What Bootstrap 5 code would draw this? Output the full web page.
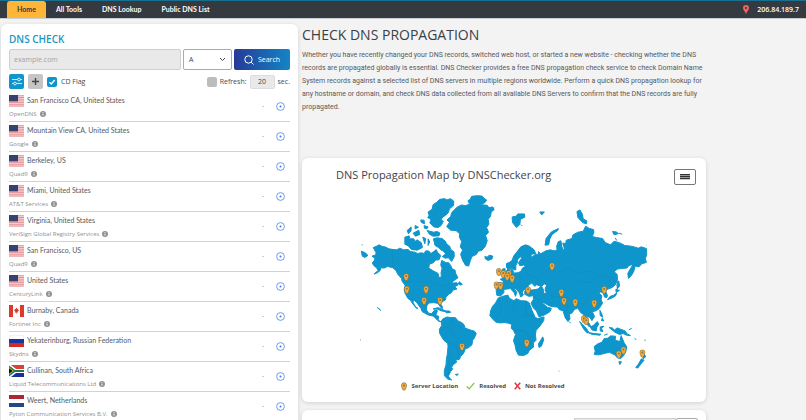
<!DOCTYPE html>
<html lang="en">
<head>
<meta charset="utf-8">
<meta name="viewport" content="width=device-width, initial-scale=1">
<title>DNS Checker</title>
<link href="https://cdn.jsdelivr.net/npm/bootstrap@5.3.0/dist/css/bootstrap.min.css" rel="stylesheet">
<style>
  html { background: #0e96cc; }
  body { font-family: "Open Sans", "Noto Sans", sans-serif; font-size: 7px; line-height: 10px; color: #45494d; background: #f3f3f3; height: 100vh; overflow: hidden; }
  .topbar { background: #343a40; border-top: 1px solid #17708f; border-bottom: 1px solid #c9ced2; height: 19px; padding: 0 7px; }
  .topbar .nav-link { color: #fff; font-family: Lato, "Open Sans", sans-serif; font-weight: 700; font-size: 7px; line-height: 17px; padding: 0 10px; }
  .topbar .nav-link.active { background: #ffb638; color: #343a40; border-radius: 3px 3px 0 0; }
  .ip-text { color: #fff; font-weight: 600; font-size: 7px; line-height: 17px; }
  .page-grid { display: grid; grid-template-columns: minmax(0, 297fr) minmax(0, 404fr) minmax(0, 96fr); column-gap: 4px; padding: 5px 0 0 1px; }
  .panel { background: #fff; border-radius: 6px; box-shadow: 0 1px 4px rgba(0,0,0,.14); }
  .check-panel { padding: 8px 8px 0; }
  .check-title { color: #1797bf; font-size: 10px; line-height: 14px; font-weight: 600; margin: 0 0 3px; }
  .lookup-form { gap: 2px; }
  .field { font-size: 7px; line-height: 10px; height: 21px; border-radius: 2px; min-width: 0; }
  .domain-input { background: #e9e9e9; border: 1px solid #cfcfcf; padding: 0 4px; color: #555; }
  .domain-input::placeholder { color: #a3a3a3; }
  .type-wrap { position: relative; width: 49px; }
  .type-select { appearance: none; width: 100%; border: 1px solid #aaa; background: #fff; padding: 0 5px; color: #444; }
  .type-wrap svg { position: absolute; right: 6px; top: 7px; pointer-events: none; }
  .search-btn { width: 56px; border: 0; color: #fff; background: linear-gradient(90deg, #263a97, #1385c5); }
  .options-row { margin: 4px 0 3px; }
  .refresh-group { gap: 3px; }
  .square-btn { width: 15px; height: 15px; border: 0; padding: 0; border-radius: 2px; background: #c5c5c5; }
  .square-btn.options { background: #0e96cc; }
  .tick { appearance: none; width: 10px; height: 10px; margin: 0; border-radius: 2px; background: #bdbdbd; }
  .tick:checked { background: #0e96cc url("data:image/svg+xml,%3Csvg xmlns='http://www.w3.org/2000/svg' viewBox='0 0 10 10'%3E%3Cpath d='M2.5 5.2 4.3 7 7.7 3' fill='none' stroke='white' stroke-width='1.4'/%3E%3C/svg%3E"); }
  .seconds { width: 25px; height: 14px; font-size: 7px; text-align: center; border: 1px solid #ddd; background: #e9e9e9; border-radius: 2px; padding: 0; color: #444; }
  .server { height: 30px; border-bottom: 1px solid #d2d2d2; color: #565a5e; padding: 3px 5px 0 0; }
  .server-name { font-family: Lato, "Open Sans", sans-serif; font-size: 7px; line-height: 10px; gap: 3px; }
  .provider { font-size: 6px; line-height: 10px; margin-top: 2px; gap: 3px; color: #8f8f8f; }
  .flag { width: 15px; height: 12px; flex: none; }
  .status { padding-bottom: 4px; }
  .dash { color: #999; width: 14px; }
  .main-title { font-size: 14px; line-height: 20px; font-weight: 500; margin: 0 0 4px; padding-top: 1px; color: #3a4046; }
  .intro { font-family: Roboto, sans-serif; font-size: 7px; line-height: 13px; margin: 0; padding-bottom: 44px; color: #55595d; }
  .map-panel { padding: 8px 10px 11px; }
  .map-title { font-size: 11px; line-height: 18px; font-weight: 500; margin: 0 0 0 24px; color: #3f4449; }
  .menu-btn { width: 22px; height: 16px; padding: 0; border: 1px solid #777; border-radius: 2px; background: #fff; margin-top: 3px; }
  .world { display: block; width: 81%; margin: 8px auto 0; padding-left: 2px; }
  .legend { font-size: 6px; line-height: 9px; font-weight: 700; color: #4a4a4a; gap: 8px; padding-right: 42px; }
  .next-panel { margin-top: 8px; padding: 8px 8px 0; height: 60px; }
  .next-panel input { width: 102px; height: 18px; border: 1px solid #cfcfcf; background: #e9e9e9; }
  .next-panel button { width: 22px; height: 18px; border: 1px solid #aaa; border-radius: 2px; background: #fff; }
</style>
</head>
<body>
<svg width="0" height="0" class="d-none">
  <defs>
    <symbol id="us" viewBox="0 0 15 12"><rect width="15" height="12" rx="1" fill="#f7dfe0"/><path d="M0 .8h15M0 2.5h15M0 4.2h15M0 5.9h15M0 7.6h15M0 9.3h15M0 11h15" stroke="#e08a8f" stroke-width=".9"/><rect width="9" height="6.4" fill="#35416f"/></symbol>
    <symbol id="ca" viewBox="0 0 15 12"><rect width="15" height="12" rx="1" fill="#fff"/><path d="M0 0h4v12H0zM11 0h4v12h-4z" fill="#dc3a2d"/><path d="M7.5 2.5 8.3 4l1-.3-.2 1.2 1 .3-1.5 1.6.3.9-1.2-.2v1.5h-.4V7.500l-1.200.2.3-.9L4.900 5.200l1-.3-.2-1.200 1 .3z" fill="#dc3a2d"/></symbol>
    <symbol id="ru" viewBox="0 0 15 12"><path d="M.3.3h14.400v11H.3z" fill="#fff" stroke="#ddd" stroke-width=".5"/><path d="M0 4h15v4H0z" fill="#1b35a0"/><path d="M0 8h15v4H0z" fill="#d42b28"/></symbol>
    <symbol id="za" viewBox="0 0 15 12"><path d="M0 0h15v12H0z" fill="#fff"/><path d="M2 0h13v4H7z" fill="#df4035"/><path d="M2 12h13V8H7z" fill="#1b2f96"/><path d="M0 .5 6 5h9v2H6l-6 4.500z" fill="#16795a"/><path d="M0 2.300 4.800 6 0 9.700z" fill="#f0b733"/><path d="M0 3.200 3.700 6 0 8.800z" fill="#111"/></symbol>
    <symbol id="nl" viewBox="0 0 15 12"><path d="M0 0h15v12H0z" fill="#fff"/><path d="M0 0h15v4H0z" fill="#ad2634"/><path d="M0 8h15v4H0z" fill="#254687"/></symbol>
    <symbol id="info" viewBox="0 0 6 6"><circle cx="3" cy="3" r="3" fill="#929292"/><path d="M3 2.600v2" stroke="#fff" stroke-width=".9"/><circle cx="3" cy="1.500" r=".5" fill="#fff"/></symbol>
    <symbol id="target" viewBox="0 0 9 9"><circle cx="4.500" cy="4.500" r="3.900" fill="none" stroke="#6d9dea" stroke-width="1"/><circle cx="4.500" cy="4.500" r="1" fill="#3d7be0"/></symbol>
    <symbol id="pin" viewBox="0 0 18 24"><path d="M9 1C4 1 1 4.500 1 9c0 5 3 7 4 12 1 3 7 3 8 0 1-5 4-7 4-12 0-4.500-3-8-8-8z" fill="#f0ab3c" stroke="#75683f" stroke-width="1.800"/><circle cx="9" cy="9" r="3" fill="#8d7550"/></symbol>
  </defs>
</svg>
<nav class="topbar d-flex justify-content-between" aria-label="Main">
  <div class="nav flex-nowrap">
    <a class="nav-link active" href="#">Home</a>
    <a class="nav-link" href="#">All Tools</a>
    <a class="nav-link" href="#">DNS Lookup</a>
    <a class="nav-link" href="#">Public DNS List</a>
  </div>
  <div class="ip-text d-flex align-items-center">
    <svg class="me-2" width="6" height="9" viewBox="0 0 6 9"><path d="M3 0a3 3 0 0 0-3 3c0 2 2 3.500 3 6 1-2.500 3-4 3-6a3 3 0 0 0-3-3z" fill="#ef6260"/><circle cx="3" cy="3" r="1" fill="#343a40"/></svg>206.84.189.7
  </div>
</nav>
<div class="page-grid">
  <section class="panel check-panel">
    <h2 class="check-title">DNS CHECK</h2>
    <form class="lookup-form d-flex">
      <input class="field domain-input flex-fill" type="text" placeholder="example.com" aria-label="Domain">
      <div class="type-wrap">
        <select class="field type-select" aria-label="Record type"><option>A</option></select>
        <svg width="7" height="7" viewBox="0 0 7 7"><path d="m1 2 2.500 2.500L6 2" fill="none" stroke="#444" stroke-width="1"/></svg>
      </div>
      <button class="field search-btn d-flex align-items-center justify-content-center gap-1 p-0" type="button"><svg width="10" height="10" viewBox="0 0 10 10" fill="none" stroke="#fff"><circle cx="4.500" cy="4.500" r="3.700"/><path d="m7.200 7.200 2.300 2.300"/></svg>Search</button>
    </form>
    <div class="options-row d-flex align-items-center gap-1">
      <button class="square-btn options d-flex align-items-center justify-content-center" type="button" aria-label="Options"><svg width="10" height="9" viewBox="0 0 10 9" fill="none" stroke="#fff" stroke-width=".8"><path d="M0 2.500h5.500M8.500 2.500H10M0 6.500h1.500M4.500 6.500H10"/><circle cx="7" cy="2.500" r="1.400"/><circle cx="3" cy="6.500" r="1.400"/></svg></button>
      <button class="square-btn d-flex align-items-center justify-content-center" type="button" aria-label="Add"><svg width="7" height="7" viewBox="0 0 7 7"><path d="M3.500 0v7M0 3.500h7" stroke="#444" stroke-width="1.400"/></svg></button>
      <input class="tick" type="checkbox" id="cd" checked><label for="cd">CD Flag</label>
      <div class="refresh-group d-flex align-items-center ms-auto">
        <input class="tick" type="checkbox" id="refresh"><label for="refresh">Refresh:</label>
        <input class="seconds" type="text" value="20" aria-label="Seconds"><span>sec.</span>
      </div>
    </div>
    <ul class="list-unstyled mb-0" id="servers"></ul>
  </section>
  <main>
    <h1 class="main-title">CHECK DNS PROPAGATION</h1>
    <p class="intro">Whether you have recently changed your DNS records, switched web host, or started a new website - checking whether the DNS records are propagated globally is essential. DNS Checker provides a free DNS propagation check service to check Domain Name System records against a selected list of DNS servers in multiple regions worldwide. Perform a quick DNS propagation lookup for any hostname or domain, and check DNS data collected from all available DNS Servers to confirm that the DNS records are fully propagated.</p>
    <section class="panel map-panel">
      <div class="d-flex justify-content-between">
        <h2 class="map-title">DNS Propagation Map by DNSChecker.org</h2>
        <button class="menu-btn d-flex align-items-center justify-content-center" type="button" aria-label="Menu"><svg width="10" height="6" viewBox="0 0 10 6"><path d="M0 .5h10M0 2.500h10M0 4.500h10" stroke="#333" stroke-width="1.300"/></svg></button>
      </div>
      <svg class="world" viewBox="0 20 930 568" role="img" aria-label="World map">
        <g fill="#0e96cc" stroke="#0e96cc" stroke-width="3" stroke-linejoin="round" fill-rule="evenodd">
          <path d="M70 184 78 181 88 176 97 181 105 182 117 188 130 190 141 191 150 186 161 191 175 190 181 196 195 198 203 202 215 200 223 202 228 194 238 195 243 202 252 201 259 190 264 199 273 208 268 221 258 222 249 231 239 234 237 246 250 254 265 262 268 275 275 272 274 260 277 247 273 236 276 223 290 230 296 229 303 238 308 249 316 252 318 262 325 275 317 281 306 288 310 291 322 290 325 297 315 302 322 309 310 312 304 321 298 324 289 333 287 342 274 349 272 353 278 362 278 368 271 362 265 352 252 350 237 351 231 360 230 372 237 382 246 383 254 373 263 374 259 386 260 389 267 391 265 402 272 407 279 404 277 408 267 406 258 398 252 391 235 387 217 377 214 368 201 350 193 343 189 348 197 362 204 367 200 367 187 351 182 343 174 337 166 322 163 310 166 298 157 286 155 277 145 266 138 253 129 245 113 241 103 246 93 245 91 253 83 260 72 264 85 253 79 244 72 239 67 230 74 222 75 216 66 210 78 206 78 199Z"/>
          <path d="M34 195 46 200 54 208 44 214 37 210zM35 176h3M165 153 178 149 180 158 192 158 195 166 202 161 215 170 218 184 202 192 185 190 175 179 165 174zM172 133 184 122 184 133 176 143zM190 141 207 132 210 145 197 150zM213 101 223 102 224 113 214 108zM219 153 228 157 225 173zM196 118 206 123 196 128zM223 118 235 122 231 128 224 126zM232 133 252 138 262 136 270 140 268 149 250 150 239 144zM235 158 240 167 235 178zM251 158 262 155 277 157 288 166 290 173 300 180 303 190 313 197 314 211 306 226 296 215 286 216 278 211 288 203 281 195 273 191 265 183 256 178zM245 201 257 193 259 202z"/>
          <path d="M235 77 247 69 250 55 261 48 270 39 285 37 292 41 302 37 312 44 312 57 299 68 296 79 288 87 279 92 274 101 281 105 274 118 265 124 252 122 240 110 244 100 234 94 238 87z"/>
          <path d="M292 101 303 91 306 79 323 62 336 56 347 58 360 54 355 43 362 39 366 30 383 28 397 29 404 36 411 41 406 49 393 55 413 57 418 64 430 62 434 70 425 77 423 90 416 99 418 114 411 124 417 138 408 148 413 164 407 181 396 193 386 195 380 205 367 211 362 224 357 240 348 238 339 223 333 204 339 192 332 182 336 166 329 153 330 143 319 133 303 132 291 121 299 109z"/>
          <path d="M406 211 413 213 419 207 430 210 427 219 415 223 407 218zM329 287 338 295 332 297 326 294zM250 369 265 365 282 372 289 377 276 375 264 370zM284 375 299 375 303 379 291 381zM82 365 89 369 92 374"/>
          <path d="M279 399 292 393 303 395 317 395 325 405 336 410 343 416 346 426 358 431 375 436 380 443 374 457 369 463 367 477 356 486 347 489 342 502 333 512 329 521 318 522 321 529 310 537 306 545 309 550 303 557 296 571 301 578 306 583 294 580 284 570 284 554 289 537 290 520 293 504 295 482 294 473 282 463 270 443 269 430 276 419 275 407zM317 566 326 565 322 569zM31 462h2"/>
          <path d="M446 336 456 332 475 327 480 337 493 344 500 338 514 344 530 345 539 350 548 374 557 394 565 398 584 393 583 404 574 417 560 434 558 447 560 463 552 471 552 484 540 493 535 503 523 509 507 508 500 494 497 479 492 464 498 446 492 434 485 427 487 416 478 412 466 410 450 411 438 408 429 399 421 389 423 375 429 361 438 351zM580 453 583 462 576 481 569 485 567 474 574 463z"/>
          <path d="M441 291 456 290 463 292 460 284 452 280 464 274 474 266 480 261 485 257 484 249 490 251 492 261 505 260 514 256 520 245 528 242 522 237 511 239 507 230 516 217 515 211 505 219 503 231 499 238 499 251 493 251 488 246 480 248 474 241 475 232 487 224 493 209 505 194 514 182 528 176 540 180 554 191 559 202 544 205 547 214 557 205 568 204 567 196 574 203 590 194 603 191 614 194 623 193 622 180 627 166 635 164 637 180 643 194 645 186 640 171 649 172 651 162 668 157 671 146 686 138 702 135 709 120 721 127 733 130 734 139 729 151 742 154 760 157 768 169 784 176 795 165 814 171 827 178 847 180 868 186 876 182 892 187 893 204 889 218 892 229 878 233 870 242 858 240 854 256 847 268 838 277 836 262 845 246 852 235 840 238 833 246 818 247 805 249 795 257 804 265 805 281 798 297 788 305 776 309 769 315 775 329 772 335 766 333 762 321 754 317 750 322 758 329 756 341 760 352 748 370 736 376 729 377 736 392 728 404 722 395 713 391 714 405 720 413 725 423 718 421 711 409 705 397 703 386 694 380 686 367 676 370 668 381 660 385 662 399 656 407 648 396 641 374 630 371 624 363 608 362 599 359 581 349 580 352 594 364 606 367 602 377 588 386 569 393 561 375 552 366 545 352 552 340 552 329 538 331 526 325 526 315 535 311 548 312 566 309 574 301 562 296 556 301 547 291 537 298 534 308 522 312 518 321 522 327 514 333 509 320 499 308 493 306 502 319 498 331 494 320 482 307 475 309 463 310 463 320 453 330 442 328 440 314zM584 293 577 301 583 313 582 322 591 322 587 309 592 297z"/>
          <path d="M470 264 479 261 481 251 475 242 477 230 471 232 471 244 475 249 469 257zM458 258 466 258 467 248 460 248zM587 177 590 157 606 137 627 127 626 132 608 145 601 159 598 176zM488 92 500 90 505 83 525 83 526 93 513 99 511 115 501 124 489 109zM571 77 585 77 577 86zM683 76 692 71 699 83 702 98 713 104 711 113 700 109 686 94zM790 136 801 137 808 142 795 146zM810 141 819 144M798 155l5 8M891 177h1M514 115l4 4"/>
          <path d="M804 286 809 285 811 300 804 309zM800 310 811 313 801 319zM803 320 799 330 788 336 775 341 783 331 793 328zM752 373 758 384 760 394 753 389zM759 397 764 405 757 404zM735 359h3M660 407l4 5M691 407 699 414 713 430 719 440 714 441 704 431zM717 440 735 443 755 445 752 448 727 445zM723 423 732 419 744 407 749 414 743 424 741 435 728 432zM753 423 764 421 757 427 761 437 753 435zM780 425 790 426 795 433 804 426 828 435 834 444 844 449 835 449 822 443 811 446 796 438zM765 448 776 444M839 432 848 427M857 457l4 5M886 463h4"/>
          <path d="M735 482 746 474 758 469 765 458 776 457 784 450 799 451 798 463 812 467 816 449 825 471 833 483 830 497 823 510 815 518 805 516 796 507 780 499 766 503 748 507 735 506 738 496zM809 528 817 528 812 536zM880 495 890 513 882 519zM877 519 885 523 876 534 866 547 860 545 868 535zM628 556h2"/>
        </g>
        <g fill="none" stroke="#1684b4" stroke-width="1.200">
          <path d="M128 190v52M165 287h82l20 9 15 6 18-10M174 337l22 3 12 9 15 4M580 263l22-15 20 12 35-13 35 15 30-7 32 12 37 8 12 25M660 265l10 15 28 10 35-3 25-20M592 322l25 12 25-6 28 18 40 10M485 257v38M505 260l8 25-18 22M530 241l5 25 28 9 10 25M493 344v30l-25 20M530 345v42h25M450 340l5 32-14 30M500 390h50M492 434h35l17 30M508 480l30-20M305 396l2 22 30 7M280 420l28 10 6 20 22 18-15 20M295 473l22 2 12 40M300 500l-4 70M552 330l28 20M610 340l-5 20M655 354l-5 30M694 370l15 20"/>
        </g>
        <g id="pins"></g>
      </svg>
      <div class="legend d-flex justify-content-center">
        <span class="d-flex align-items-center"><svg class="me-1" width="6" height="9"><use href="#pin"/></svg>Server Location</span>
        <span class="d-flex align-items-center"><svg class="me-1" width="9" height="8" viewBox="0 0 9 8"><path d="m.7 4.500 2.500 2.300L8.300.8" fill="none" stroke="#83c44c" stroke-width="1.300"/></svg>Resolved</span>
        <span class="d-flex align-items-center"><svg class="me-1" width="7" height="8" viewBox="0 0 7 8"><path d="m.8.8 5.400 6.400m0-6.400L.8 7.200" fill="none" stroke="#e23a48" stroke-width="1.600"/></svg>Not Resolved</span>
      </div>
    </section>
    <section class="panel next-panel d-flex justify-content-end"><input type="text" aria-label="Filter"><button type="button" aria-label="Apply"></button></section>
  </main>
</div>
<script src="https://cdn.jsdelivr.net/npm/bootstrap@5.3.0/dist/js/bootstrap.bundle.min.js"></script>
<script>
  const servers = [
    ["us", "San Francisco CA, United States", "OpenDNS"],
    ["us", "Mountain View CA, United States", "Google"],
    ["us", "Berkeley, US", "Quad9"],
    ["us", "Miami, United States", "AT&amp;T Services"],
    ["us", "Virginia, United States", "VeriSign Global Registry Services"],
    ["us", "San Francisco, US", "Quad9"],
    ["us", "United States", "CenturyLink"],
    ["ca", "Burnaby, Canada", "Fortinet Inc"],
    ["ru", "Yekaterinburg, Russian Federation", "Skydns"],
    ["za", "Cullinan, South Africa", "Liquid Telecommunications Ltd"],
    ["nl", "Weert, Netherlands", "Pyton Communication Services B.V."]
  ];
  document.getElementById("servers").innerHTML = servers.map(([flag, place, provider]) => `
    <li class="server d-flex">
      <div class="flex-fill">
        <div class="server-name d-flex"><svg class="flag" viewBox="0 0 15 12"><use href="#${flag}"/></svg><span>${place}</span></div>
        <div class="provider d-flex align-items-center">${provider}<svg width="6" height="6"><use href="#info"/></svg></div>
      </div>
      <div class="status d-flex align-items-center"><span class="dash">-</span><svg width="9" height="9"><use href="#target"/></svg></div>
    </li>`).join("");
  const pins = [[169,273],[171,311],[229,311],[223,345],[271,345],[337,483],[448,258],[461,264],[478,264],[473,272],[488,278],[441,298],[453,300],[608,241],[536,313],[636,321],[765,312],[644,346],[678,350],[735,353],[704,400],[711,406],[532,472],[823,494],[809,506],[880,503]];
  document.getElementById("pins").innerHTML = pins.map(([x, y]) => `<use href="#pin" x="${x - 9}" y="${y - 12}" width="18" height="24"/>`).join("");
</script>
</body>
</html>
